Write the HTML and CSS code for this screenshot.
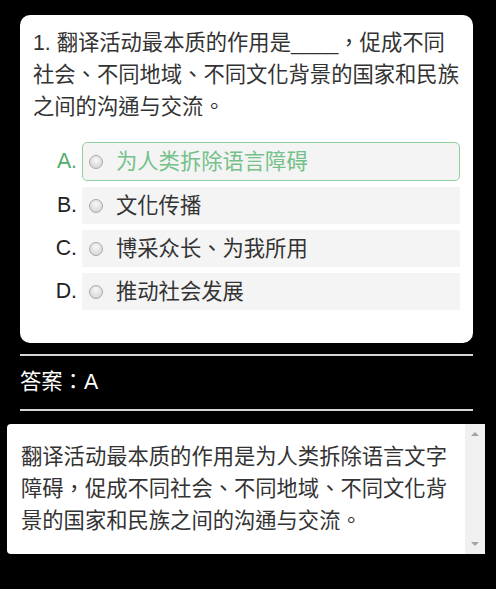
FILE: index.html
```html
<!DOCTYPE html>
<html lang="zh-TW">
<head>
  <meta charset="UTF-8">
  <meta name="viewport" content="width=device-width, initial-scale=1.0">
  <title>题目</title>
  <link rel="stylesheet" href="styles.css">
</head>
<body>
  <div class="card">
    <p class="question">1. 翻译活动最本质的作用是____，促成不同社会、不同地域、不同文化背景的国家和民族之间的沟通与交流。</p>
    <ul class="options">
      <li class="option correct">
        <span class="letter">A.</span>
        <label class="choice"><span class="radio"></span>为人类拆除语言障碍</label>
      </li>
      <li class="option">
        <span class="letter">B.</span>
        <label class="choice"><span class="radio"></span>文化传播</label>
      </li>
      <li class="option">
        <span class="letter">C.</span>
        <label class="choice"><span class="radio"></span>博采众长、为我所用</label>
      </li>
      <li class="option">
        <span class="letter">D.</span>
        <label class="choice"><span class="radio"></span>推动社会发展</label>
      </li>
    </ul>
  </div>

  <div class="answer">
    <hr>
    <p class="answer-text">答案：A</p>
    <hr>
  </div>

  <div class="explain">
    <div class="explain-text">翻译活动最本质的作用是为人类拆除语言文字障碍，促成不同社会、不同地域、不同文化背景的国家和民族之间的沟通与交流。</div>
    <div class="scrollbar">
      <span class="arrow up"></span>
      <span class="arrow down"></span>
    </div>
  </div>
</body>
</html>
```

FILE: styles.css
```css
body {
  margin: 0;
  padding: 15px 0 0;
  background-color: #000;
  font-family: "Liberation Sans", "Noto Sans CJK TC", sans-serif;
  font-size: 21.3px;
}

.card {
  margin: 0 23px 0 20px;
  padding: 12px 13px 33px;
  background: #fff;
  border-radius: 10px;
}

.question {
  margin: 0;
  line-height: 32px;
  color: #333;
}

.options {
  list-style-type: none;
  margin: 19px 0 0;
  padding: 0;
}

.option {
  display: flex;
  align-items: center;
  margin-bottom: 6px;
}

.option:last-child {
  margin-bottom: 0;
}

.letter {
  width: 44px;
  padding-right: 5px;
  text-align: right;
  color: #222;
}

.choice {
  flex: 1;
  display: flex;
  align-items: center;
  height: 37px;
  padding-left: 7px;
  background-color: #f4f4f4;
  color: #333;
  line-height: 34px;
}

.correct .letter {
  color: #52ad6b;
}

.correct .choice {
  padding-left: 6px;
  border: 1px solid #8fd19e;
  border-radius: 5px;
  color: #74c18a;
}

.radio {
  flex: none;
  width: 12px;
  height: 12px;
  margin-right: 13px;
  border: 1px solid #a9a9a9;
  border-radius: 50%;
  background: radial-gradient(circle at 50% 35%, #f8f8f8, #cdcdcd);
}

.answer {
  margin: 11px 23px 0 20px;
}

.answer hr {
  margin: 0;
  height: 2px;
  border: none;
  background-color: #d6d6d6;
}

.answer-text {
  margin: 10px 0 11px;
  line-height: 32px;
  color: #fff;
}

.explain {
  display: flex;
  height: 130px;
  margin: 13px 11px 0 7px;
  background: #fff;
  border-radius: 4px 0 0 4px;
}

.explain-text {
  flex: 1;
  padding: 17px 10px 0 14px;
  line-height: 32px;
  color: #333;
}

.scrollbar {
  width: 20px;
  display: flex;
  flex-direction: column;
  justify-content: space-between;
  align-items: center;
  padding: 8px 0;
  background-color: #f0f0f0;
}

.arrow {
  width: 0;
  height: 0;
  border-left: 4px solid transparent;
  border-right: 4px solid transparent;
}

.arrow.up {
  border-bottom: 4px solid #a3a3a3;
}

.arrow.down {
  border-top: 4px solid #a3a3a3;
}
```
